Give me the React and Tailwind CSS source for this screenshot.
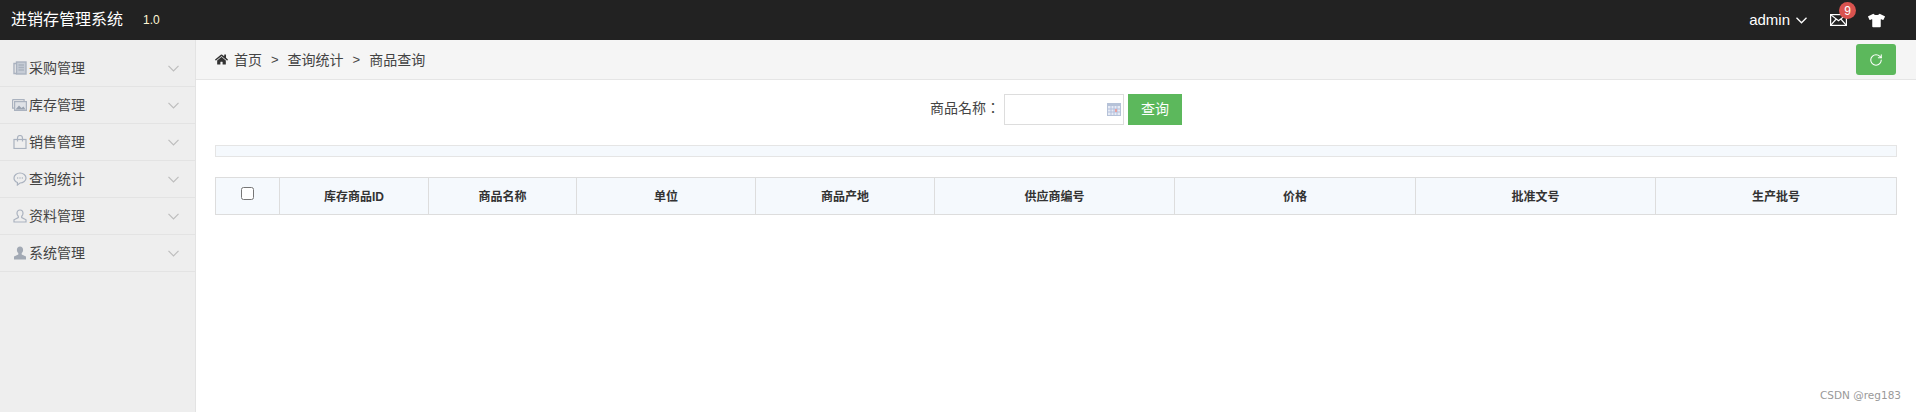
import React from 'react';
import { FaHome, FaTshirt } from 'react-icons/fa';
import { RotateCw } from 'lucide-react';

const font = '[font-family:"Liberation_Sans","Noto_Sans_CJK_SC",sans-serif]';

function IconBook() {
    return (
        <svg width="14" height="14" viewBox="0 0 14 14" fill="none" stroke="#aab2bf" strokeWidth="1.4">
            <rect x="3.5" y="1" width="9.5" height="12" fill="#c6ccd6" />
            <path d="M3.500 2.500H1v10h2.500M5.500 4h5.500M5.500 6.500h5.500M5.500 9h5.500" />
        </svg>
    );
}

function IconPicture() {
    return (
        <svg width="15" height="12" viewBox="0 0 15 12" fill="none" stroke="#aab2bf" strokeWidth="1.2">
            <path d="M.6.6h11.500v1.600M.6.6v8.600h1.600" />
            <rect x="2.6" y="2.6" width="11.8" height="8.8" fill="#dfe2e7" />
            <path d="M3.500 10.500l3.500-4 2.500 2.500 2-1.500 2 3z" fill="#9aa3b1" stroke="none" />
        </svg>
    );
}

function IconBag() {
    return (
        <svg width="14" height="14" viewBox="0 0 14 14" fill="none" stroke="#aab2bf" strokeWidth="1.2">
            <rect x="1" y="4.5" width="12" height="9" />
            <path d="M4.500 6.500V3a2.500 2.500 0 0 1 5 0v3.500" />
        </svg>
    );
}

function IconChat() {
    return (
        <svg width="14" height="14" viewBox="0 0 14 14" fill="none" stroke="#aab2bf" strokeWidth="1.2">
            <path d="M7 1c3.300 0 6 2.200 6 5s-2.700 5-6 5l-2.600 2V10.500C2.400 9.700 1 8 1 6c0-2.800 2.700-5 6-5z" />
            <path d="M4.200 6h1M6.500 6h1M8.800 6h1" strokeWidth="1.500" />
        </svg>
    );
}

function IconUser() {
    return (
        <svg width="14" height="14" viewBox="0 0 14 14" fill="none" stroke="#aab2bf" strokeWidth="1.2">
            <path d="M7 1c-1.800 0-3 1.300-3 3.200 0 1.300.5 2.400 1.300 3.100v1.300L1 10.800V13h12v-2.200L8.700 8.600V7.300C9.500 6.600 10 5.500 10 4.200 10 2.300 8.800 1 7 1z" />
        </svg>
    );
}

function IconUserSolid() {
    return (
        <svg width="14" height="14" viewBox="0 0 14 14" fill="#a2a9b4">
            <path d="M7 .5c-1.900 0-3.100 1.400-3.100 3.300 0 1.400.5 2.600 1.400 3.300v1.400L1 10.600V13.500h12v-2.900L8.700 8.500V7.100c.9-.7 1.400-1.900 1.400-3.300C10.100 1.900 8.900.5 7 .5z" />
        </svg>
    );
}

function IconMail() {
    return (
        <svg width="17" height="12" viewBox="0 0 17 12" fill="none" stroke="#fff" strokeWidth="1.200">
            <rect x=".6" y=".6" width="15.800" height="10.800" />
            <path d="M.6.6l7.900 6.200L16.400.6M.6 11.400l5.600-6.400M16.400 11.400l-5.600-6.400" />
        </svg>
    );
}

function IconCalendar() {
    return (
        <svg width="14" height="13" viewBox="0 0 14 13">
            <rect width="14" height="13" fill="#b6c2d8" />
            <rect x="1" y="3" width="12" height="9" fill="#e6ebf5" />
            <path d="M1 6h12M1 9h12M4 3v9M7 3v9M10 3v9" stroke="#b3bfdc" strokeWidth="1" />
            <rect x="8" y="6" width="2" height="3" fill="#e8a0a0" />
        </svg>
    );
}

function Chevron() {
    return (
        <svg width="11" height="7" viewBox="0 0 11 7" fill="none" stroke="#bdbdbd" strokeWidth="1.200">
            <path d="M.5.8l5 5 5-5" />
        </svg>
    );
}

const menu = [
    { label: '采购管理', icon: IconBook },
    { label: '库存管理', icon: IconPicture },
    { label: '销售管理', icon: IconBag },
    { label: '查询统计', icon: IconChat },
    { label: '资料管理', icon: IconUser },
    { label: '系统管理', icon: IconUserSolid },
];

const columns = [
    { label: '库存商品ID', w: 'w-[149px]' },
    { label: '商品名称', w: 'w-[148px]' },
    { label: '单位', w: 'w-[179px]' },
    { label: '商品产地', w: 'w-[179px]' },
    { label: '供应商编号', w: 'w-[240px]' },
    { label: '价格', w: 'w-[241px]' },
    { label: '批准文号', w: 'w-[240px]' },
    { label: '生产批号', w: 'flex-1' },
];

function MenuItem({ label, icon: Icon, first }) {
    return (
        <div className={`flex items-center border-b border-[#e3e3e3] pl-[10px] pr-[16px] ${first ? 'h-[47px] pt-[10px]' : 'h-[37px]'}`}>
            <span className="flex w-[19px] justify-center">
                <Icon />
            </span>
            <span className="flex-1 text-[14px] text-[#444]">{label}</span>
            <Chevron />
        </div>
    );
}

export default function App() {
    return (
        <div className={`relative flex min-h-[412px] flex-col bg-white ${font}`}>
            <header className="flex h-[40px] items-center bg-[#222] pr-[31px] pl-[11px] text-white">
                <span className="text-[16px]">进销存管理系统</span>
                <span className="ml-[20px] text-[12px] text-[#fff7d6]">1.0</span>
                <div className="ml-auto flex items-center">
                    <span className="text-[15px]">admin</span>
                    <svg className="ml-[6px]" width="11" height="7" viewBox="0 0 11 7" fill="none" stroke="#fff" strokeWidth="1.300">
                        <path d="M.5.8l5 5 5-5" />
                    </svg>
                    <div className="relative ml-[23px] flex">
                        <IconMail />
                        <span className="absolute -top-[12px] left-[9px] flex h-[17px] w-[17px] items-center justify-center rounded-full bg-[#d9534f] text-[12px]">9</span>
                    </div>
                    <FaTshirt className="ml-[21px] text-[17px]" />
                </div>
            </header>
            <div className="flex flex-1">
                <aside className="w-[196px] shrink-0 border-r border-[#e3e3e3] bg-[#eee]">
                    {menu.map((item, i) => (
                        <MenuItem key={item.label} label={item.label} icon={item.icon} first={i === 0} />
                    ))}
                </aside>
                <main className="min-w-0 flex-1">
                    <div className="flex h-[40px] items-center border-b border-[#e5e5e5] bg-[#f5f5f5] pr-[20px] pl-[19px] text-[14px] text-[#444]">
                        <FaHome className="text-[13px] text-[#333]" />
                        <span className="ml-[6px] pt-[1px]">首页</span>
                        <span className="mx-[9px] pt-[1px] text-[13px]">&gt;</span>
                        <span className="pt-[1px]">查询统计</span>
                        <span className="mx-[9px] pt-[1px] text-[13px]">&gt;</span>
                        <span className="pt-[1px]">商品查询</span>
                        <button className="ml-auto flex h-[31px] w-[40px] items-center justify-center rounded-[3px] bg-[#5cb85c] text-white">
                            <RotateCw size={14} strokeWidth={1.8} />
                        </button>
                    </div>
                    <div className="px-[19px]">
                        <div className="mt-[14px] flex h-[31px] items-center justify-center text-[14px] text-[#444]">
                            <span className="mr-[4px] pb-[2px] [font-family:'Liberation_Sans','Noto_Sans_CJK_TC',sans-serif]">商品名称：</span>
                            <div className="flex h-[31px] w-[120px] items-center justify-end border border-[#ddd] pr-[2px]">
                                <IconCalendar />
                            </div>
                            <button className="ml-[4px] h-[31px] w-[54px] bg-[#5cb85c] text-[14px] text-white">查询</button>
                        </div>
                        <div className="mt-[20px] h-[12px] border border-[#e5e5e5] bg-[#f5f9fd]" />
                        <div className="mt-[20px] flex h-[38px] border border-[#ddd] bg-[#f5f9fd] text-[12px] font-bold text-[#333]">
                            <div className="flex w-[64px] justify-center border-r border-[#ddd] pt-[9px]">
                                <input type="checkbox" className="h-[13px] w-[13px]" />
                            </div>
                            {columns.map((col, i) => (
                                <div
                                    key={col.label}
                                    className={`flex items-center justify-center pt-[2px] ${col.w} ${i < columns.length - 1 ? 'border-r border-[#ddd]' : ''}`}
                                >
                                    {col.label}
                                </div>
                            ))}
                        </div>
                    </div>
                </main>
            </div>
            <span className="absolute right-[15px] bottom-[8px] text-[10.5px] text-[#999] [font-family:'DejaVu_Sans',sans-serif]">CSDN @reg183</span>
        </div>
    );
}
